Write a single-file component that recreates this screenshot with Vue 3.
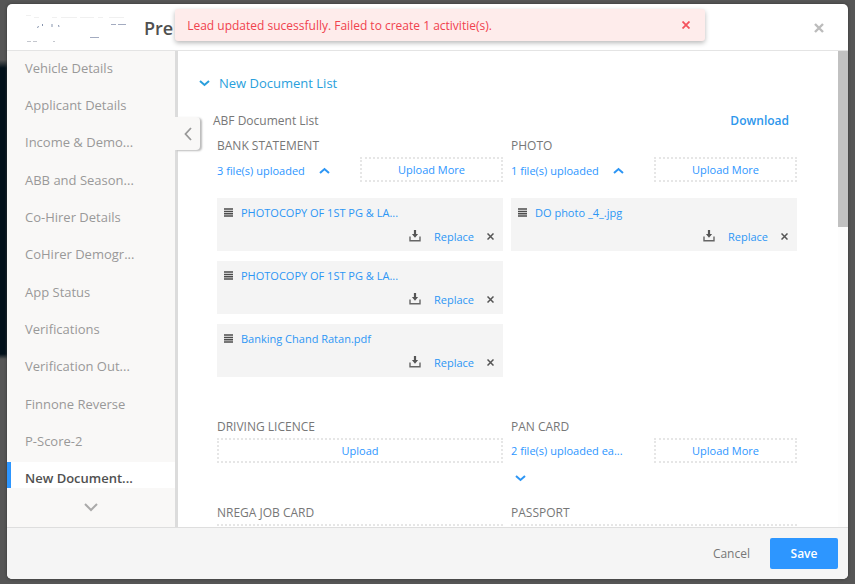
<script setup>
import { ref } from 'vue'

const tabs = [
  'Vehicle Details', 'Applicant Details', 'Income & Demo...', 'ABB and Season...',
  'Co-Hirer Details', 'CoHirer Demogr...', 'App Status', 'Verifications',
  'Verification Out...', 'Finnone Reverse', 'P-Score-2', 'New Document...',
]
const active = ref('New Document...')

const groups = [
  {
    name: 'BANK STATEMENT', status: '3 file(s) uploaded', open: true,
    files: ['PHOTOCOPY OF 1ST PG & LA...', 'PHOTOCOPY OF 1ST PG & LA...', 'Banking Chand Ratan.pdf'],
  },
  { name: 'PHOTO', status: '1 file(s) uploaded', open: true, files: ['DO photo _4_.jpg'] },
  { name: 'DRIVING LICENCE', files: [] },
  { name: 'PAN CARD', status: '2 file(s) uploaded ea...', open: false, files: [] },
  { name: 'NREGA JOB CARD', files: [] },
  { name: 'PASSPORT', files: [] },
]
</script>

<template>
  <div class="backdrop">
    <div class="modal" role="dialog" aria-label="Lead form">
      <header class="header">
        <svg class="logo" width="104" height="30" viewBox="0 0 104 30" aria-hidden="true">
          <g fill="none" stroke-width="1">
            <path d="M1 2.500h5m3 2h5M27 4.500h5m4 0h16m3 0h14m4 0h5m6 0h15" stroke="#f0f0f0" />
            <path d="M12.500 15l1-2M17.500 13v-2M27 14v-3M34 14l-.5-2" stroke="#8795ae" />
            <path d="M86 11.500h5m2 0h8M65 24.500h9" stroke="#a3abc0" />
            <path d="M2 28.500h4m2 0h4M28 28.500h2" stroke="#c4c7ce" />
          </g>
        </svg>
        <h1 class="title">Pre</h1>
        <button class="close" type="button" aria-label="Close">
          <svg width="10" height="10" viewBox="0 0 10 10"><path d="M1 1l8 8M9 1l-8 8" stroke="#bcbcbc" stroke-width="2.400" /></svg>
        </button>
        <div class="toast" role="alert">
          <span>Lead updated sucessfully. Failed to create 1 activitie(s).</span>
          <button class="toast-close" type="button" aria-label="Dismiss">
            <svg width="8" height="8" viewBox="0 0 8 8"><path d="M.5.500l7 7M7.500.500l-7 7" stroke="#f4525c" stroke-width="1.800" /></svg>
          </button>
        </div>
      </header>

      <div class="body">
        <nav class="sidebar">
          <div class="tab-view">
            <ul class="tabs">
              <li v-for="t in tabs" :key="t">
                <button type="button" class="tab" :class="{ active: t === active }" @click="active = t">{{ t }}</button>
              </li>
            </ul>
          </div>
          <button class="more" type="button" aria-label="More tabs">
            <svg width="14" height="9" viewBox="0 0 14 9"><path d="M1 1l6 6 6-6" fill="none" stroke="#aaa" stroke-width="2" /></svg>
          </button>
        </nav>
        <button class="collapse" type="button" aria-label="Collapse">
          <svg width="8" height="14" viewBox="0 0 8 14"><path d="M7 1L1.500 7 7 13" fill="none" stroke="#999" stroke-width="1.800" /></svg>
        </button>

        <main class="main">
          <div class="content">
            <h2 class="section">
              <svg width="11" height="7" viewBox="0 0 11 7"><path d="M1 1l4.500 4L10 1" fill="none" stroke="#2a9fdc" stroke-width="2" /></svg>
              New Document List
            </h2>
            <div class="subhead">
              <span>ABF Document List</span>
              <a href="#" class="download">Download</a>
            </div>
            <div class="grid">
              <section v-for="g in groups" :key="g.name" class="group">
                <h3 class="label">{{ g.name }}</h3>
                <button v-if="!g.status" class="upload wide" type="button">Upload</button>
                <div v-else class="row">
                  <button class="status" :class="{ folded: !g.open }" type="button">
                    <span>{{ g.status }}</span>
                    <svg width="11" height="7" viewBox="0 0 11 7">
                      <path :d="g.open ? 'M1 6l4.500-4L10 6' : 'M1 1l4.500 4L10 1'" fill="none" stroke="#2d96f5" stroke-width="2" />
                    </svg>
                  </button>
                  <button class="upload" type="button">Upload More</button>
                </div>
                <ul v-if="g.files.length" class="files">
                  <li v-for="(f, i) in g.files" :key="i" class="file">
                    <div class="file-name">
                      <svg width="9" height="9" viewBox="0 0 9 9"><path d="M0 1h9M0 3.400h9M0 5.700h9M0 8h9" stroke="#4c4c4c" stroke-width="1.500" /></svg>
                      <a href="#">{{ f }}</a>
                    </div>
                    <div class="actions">
                      <button type="button" aria-label="Download file">
                        <svg width="12" height="12" viewBox="0 0 12 12">
                          <path d="M1 6.500v4.300h10V6.500" fill="none" stroke="#666" stroke-width="1.400" />
                          <path d="M4.900 0h2.200v4h2L6 7.800 2.900 4h2z" fill="#555" />
                        </svg>
                      </button>
                      <button type="button" class="replace">Replace</button>
                      <button type="button" aria-label="Remove file">
                        <svg width="7" height="7" viewBox="0 0 7 7"><path d="M.5.500l6 6M6.500.500l-6 6" stroke="#555" stroke-width="1.500" /></svg>
                      </button>
                    </div>
                  </li>
                </ul>
              </section>
            </div>
          </div>
          <div class="scrollbar"><div class="thumb"></div></div>
        </main>
      </div>

      <footer class="footer">
        <button class="cancel" type="button">Cancel</button>
        <button class="save" type="button">Save</button>
      </footer>
    </div>
  </div>
</template>

<style>
body { background: #565656; }
</style>

<style scoped>
* { box-sizing: border-box; }
h1, h2, h3, ul { margin: 0; padding: 0; font-weight: 400; list-style: none; }
button { font: inherit; color: inherit; background: none; border: 0; padding: 0; cursor: pointer; }
a { color: inherit; text-decoration: none; }
svg { display: block; flex: none; }

.backdrop {
  height: 100vh;
  padding: 4px 7px 5px;
  font-family: "Open Sans", "Noto Sans", sans-serif;
  font-size: 12px;
  color: #777;
  background: linear-gradient(#565656 60px, #03111b 68px, #03111b 354px, #565656 359px) left top / 7px 100% no-repeat #565656;
}
.modal {
  display: flex;
  flex-direction: column;
  height: 100%;
  background: #fff;
  border-radius: 5px;
  box-shadow: 0 0 3px #333;
  overflow: hidden;
}
.header {
  position: relative;
  flex: none;
  display: flex;
  align-items: center;
  height: 47px;
  padding: 1px 24px 0 18px;
  border-bottom: 1px solid #e4e4e4;
}
.title { margin-left: 15px; font-size: 18px; font-weight: 600; color: #505050; }
.close { margin-left: auto; }
.toast {
  position: absolute;
  top: 5px;
  left: 20%;
  width: 63%;
  height: 32px;
  display: flex;
  align-items: center;
  justify-content: space-between;
  padding: 0 15px 0 12px;
  font-size: 12px;
  color: #f0424e;
  background: #feeceb;
  border-radius: 3px;
  box-shadow: 0 2px 5px rgba(0, 0, 0, .28);
}

.body { position: relative; flex: 1; min-height: 0; display: flex; }
.sidebar { flex: none; width: 168px; display: flex; flex-direction: column; background: #f9f8f7; }
.tab-view { flex: 1; min-height: 0; overflow: hidden; }
.tabs { display: flex; flex-direction: column; height: 448px; }
.tabs li { flex: 1; display: flex; }
.tab { width: 100%; padding: 0 0 4px 18px; text-align: left; font-size: 13px; color: #999; }
.tab.active { padding-left: 14px; border-left: 4px solid #2d96ff; background: #fff; color: #505050; font-weight: 600; }
.more { flex: none; height: 39px; display: grid; place-items: center; }
.collapse {
  position: absolute;
  z-index: 1;
  left: 168px;
  top: 66px;
  width: 25px;
  height: 33px;
  display: flex;
  align-items: center;
  padding-left: 9px;
  background: #f9f8f7;
  border-radius: 0 4px 4px 0;
  box-shadow: 2px 1px 2px #bbb;
}
.main { flex: 1; min-width: 0; display: flex; border-left: 3px solid #dcdcdc; }
.content { flex: 1; min-width: 0; overflow: hidden; padding: 20px 41px 0 39px; }
.scrollbar { flex: none; width: 10px; background: #fdfdfd; }
.thumb { height: 37%; background: #c1c1c1; }

.section { display: flex; align-items: center; gap: 9px; height: 24px; margin-left: -18px; font-size: 13px; color: #2a9fdc; }
.subhead { display: flex; align-items: center; justify-content: space-between; height: 26px; margin: 12px 8px 0 -4px; }
.download { font-weight: 600; color: #2d96ec; }
.grid { display: grid; grid-template-columns: 1fr 1fr; column-gap: 8px; row-gap: 17px; margin-top: 3px; }
.label { height: 21px; line-height: 20px; font-size: 12px; }
.row { display: flex; justify-content: space-between; align-items: flex-start; }
.status {
  display: flex;
  flex-wrap: wrap;
  align-items: center;
  align-content: center;
  gap: 10px;
  width: 124px;
  min-height: 26px;
  font-size: 11px;
  color: #2d96ff;
}
.status svg { margin: 0 4px; }
.status.folded { height: 48px; row-gap: 17px; }
.upload { width: 50%; height: 25px; font-size: 11px; color: #2d96ff; border: 2px dotted #e6e6e6; }
.wide { width: 100%; display: block; }
.files { display: flex; flex-direction: column; gap: 10px; padding: 15px 0 23px; }
.file { height: 53px; padding: 5px 9px 5px 7px; background: #f4f4f4; font-size: 11px; color: #2d96f5; }
.file-name { display: flex; align-items: center; gap: 8px; height: 18px; }
.actions { display: flex; align-items: center; justify-content: flex-end; gap: 13px; height: 30px; }

.footer {
  flex: none;
  display: flex;
  align-items: center;
  justify-content: flex-end;
  gap: 20px;
  height: 52px;
  padding: 0 10px;
  border-top: 1px solid #dedede;
  background: #f5f5f5;
}
.save { width: 68px; height: 31px; border-radius: 2px; background: #2d96ff; color: #fff; font-weight: 600; }
</style>
